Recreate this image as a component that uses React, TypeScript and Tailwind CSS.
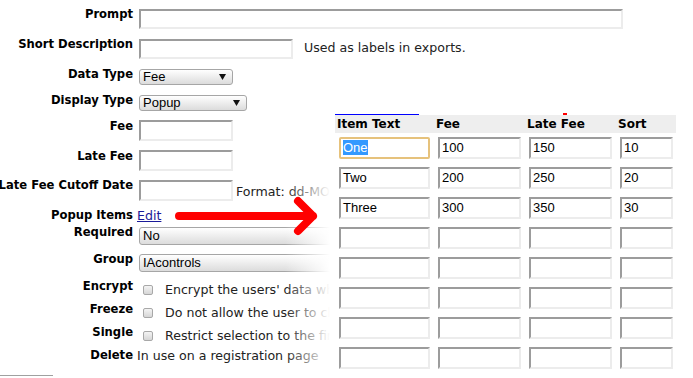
import React from "react"

const label = "text-[11.6px] leading-[15px] font-bold text-black"
const plain = "text-[12.6px] leading-[15px] text-[#222] whitespace-nowrap"
const inset = "border-2 border-t-[#9c9c9c] border-l-[#9c9c9c] border-r-[#ececec] border-b-[#ececec] bg-white"

type RowProps = {
    name: string
    h: string
    children?: React.ReactNode
}

const Row: React.FC<RowProps> = ({ name, h, children }) => (
    <div className={`flex items-start ${h}`}>
        <div className="w-[133px] shrink-0 flex justify-end">
            <span className={`${label} whitespace-nowrap`}>{name}</span>
        </div>
        {children}
    </div>
)

const Select: React.FC<{ value: string, w: string, h: string }> = ({ value, w, h }) => (
    <div className={`mt-[2px] ml-[6px] ${w} ${h} shrink-0 flex items-center justify-between rounded-[3px] border border-[#a6a6a6] bg-linear-to-b from-white to-[#dcdcdc] pl-[3px] pr-[6px]`}>
        <span className="text-[13px] leading-[14px] text-black font-['Liberation_Sans',Arial,sans-serif]">{value}</span>
        <svg width="7" height="6" viewBox="0 0 7 6"><polygon points="0,0 7,0 3.5,6" fill="#111" /></svg>
    </div>
)

const Check: React.FC<{ text: string }> = ({ text }) => (
    <>
        <div className="mt-[6px] ml-[10px] w-[10px] h-[10px] shrink-0 rounded-[2px] border border-[#a8a8a8] bg-linear-to-b from-[#f4f4f4] to-[#d6d6d6]" />
        <span className={`ml-[12px] mt-[3px] ${plain}`}>{text}</span>
    </>
)

const cols = [
    { w: "w-[99px]", iw: "w-[91px]", head: "Item Text" },
    { w: "w-[91px]", iw: "w-[83px]", head: "Fee" },
    { w: "w-[91px]", iw: "w-[83px]", head: "Late Fee" },
    { w: "w-[60px]", iw: "w-[53px]", head: "Sort" },
]

const items = [
    ["One", "100", "150", "10"],
    ["Two", "200", "250", "20"],
    ["Three", "300", "350", "30"],
    ["", "", "", ""],
    ["", "", "", ""],
    ["", "", "", ""],
    ["", "", "", ""],
    ["", "", "", ""],
]

const PopupItems = () => (
    <div className="absolute left-[285px] top-[100px] right-0 bottom-0 flex">
        <div className="w-[45px] h-full bg-linear-to-r from-white/0 to-white" />
        <div className="flex-1 bg-white pt-[14px] pl-[5px]">
            <div className="flex h-px">
                <div className="w-[84px] h-px bg-[#0000ff]" />
                <div className="ml-[144px] -mt-[1px] w-[4px] h-[2px] bg-[#ff0000]" />
            </div>
            <div className="flex w-[341px] h-[18px] bg-[#eeeeee]">
                {cols.map(c => (
                    <div key={c.head} className={`${c.w} pl-[2px] pt-[2px] ${label} text-[12px]`}>{c.head}</div>
                ))}
            </div>
            <div className="pt-[4px]">
                {items.map((row, r) => (
                    <div key={r} className="flex h-[30px]">
                        {cols.map((c, i) => (
                            <div key={i} className={`${c.w} pl-[4px]`}>
                                {r === 0 && i === 0 ? (
                                    <div className={`${c.iw} h-[22px] rounded-[2px] border-2 border-[#e6c27c] bg-white pl-[2px] text-[13px] leading-[18px] font-['Liberation_Sans',Arial,sans-serif]`}>
                                        <span className="bg-[#3399ff] text-white">{row[i]}</span>
                                    </div>
                                ) : (
                                    <div className={`${c.iw} h-[22px] ${inset} pl-[2px] text-[13px] leading-[18px] text-black font-['Liberation_Sans',Arial,sans-serif]`}>
                                        {row[i]}
                                    </div>
                                )}
                            </div>
                        ))}
                    </div>
                ))}
            </div>
        </div>
    </div>
)

const Arrow = () => (
    <svg className="absolute left-0 top-0" width="693" height="378" viewBox="0 0 693 378">
        <path d="M179 216 L313 216 M298 201 L313 216 L298 231" stroke="#ff0000" strokeWidth="8" strokeLinecap="round" strokeLinejoin="round" fill="none" />
    </svg>
)

export default function App() {
    return (
        <div className="relative w-[693px] h-[378px] overflow-hidden bg-white font-['DejaVu_Sans',Verdana,sans-serif]">
            <div className="pt-[7px]">
                <Row name="Prompt" h="h-[30px]">
                    <div className={`mt-[2px] ml-[6px] w-[484px] h-[20px] ${inset}`} />
                </Row>
                <Row name="Short Description" h="h-[30px]">
                    <div className={`mt-[2px] ml-[6px] w-[154px] h-[20px] shrink-0 ${inset}`} />
                    <span className={`ml-[11px] mt-[3px] ${plain}`}>Used as labels in exports.</span>
                </Row>
                <Row name="Data Type" h="h-[26px]">
                    <Select value="Fee" w="w-[94px]" h="h-[16px]" />
                </Row>
                <Row name="Display Type" h="h-[26px]">
                    <Select value="Popup" w="w-[108px]" h="h-[16px]" />
                </Row>
                <Row name="Fee" h="h-[30px]">
                    <div className={`mt-[1px] ml-[6px] w-[94px] h-[21px] ${inset}`} />
                </Row>
                <Row name="Late Fee" h="h-[29px]">
                    <div className={`mt-[1px] ml-[6px] w-[94px] h-[21px] ${inset}`} />
                </Row>
                <Row name="Late Fee Cutoff Date" h="h-[30px]">
                    <div className={`mt-[2px] ml-[6px] w-[94px] h-[21px] shrink-0 ${inset}`} />
                    <span className={`ml-[3px] mt-[6px] ${plain}`}>Format: dd-MON-YYYY</span>
                </Row>
                <Row name="Popup Items" h="h-[17px]">
                    <a className="ml-[4px] text-[12.6px] leading-[15px] text-[#1a1a99] underline">Edit</a>
                </Row>
                <Row name="Required" h="h-[27px]">
                    <Select value="No" w="w-[260px]" h="h-[18px]" />
                </Row>
                <Row name="Group" h="h-[27px]">
                    <Select value="IAcontrols" w="w-[260px]" h="h-[18px]" />
                </Row>
                <Row name="Encrypt" h="h-[23px]">
                    <Check text="Encrypt the users' data when stored" />
                </Row>
                <Row name="Freeze" h="h-[23px]">
                    <Check text="Do not allow the user to change" />
                </Row>
                <Row name="Single" h="h-[23px]">
                    <Check text="Restrict selection to the first" />
                </Row>
                <Row name="Delete" h="h-[23px]">
                    <span className={`ml-[4px] ${plain}`}>In use on a registration page</span>
                </Row>
                <div className="mt-[4px] w-[53px] border-t border-[#a0a0a0]" />
            </div>
            <PopupItems />
            <Arrow />
        </div>
    )
}
